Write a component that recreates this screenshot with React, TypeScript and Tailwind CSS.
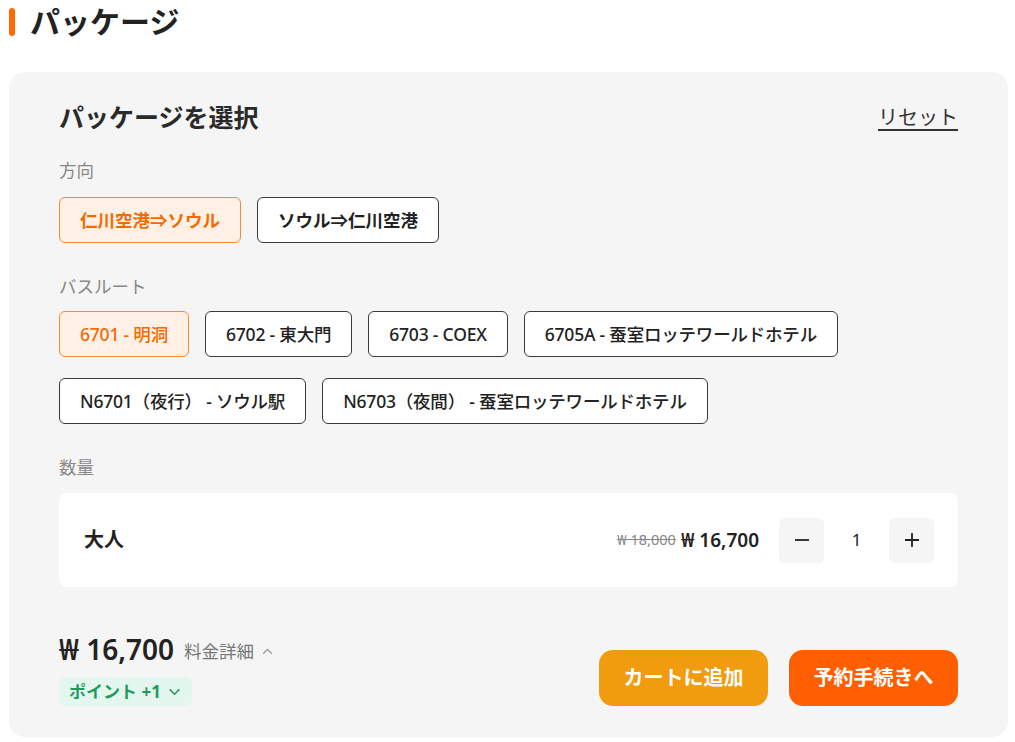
import { useState } from "react";

const directions = ["仁川空港⇒ソウル", "ソウル⇒仁川空港"];
const routes = [
  "6701 - 明洞",
  "6702 - 東大門",
  "6703 - COEX",
  "6705A - 蚕室ロッテワールドホテル",
  "N6701（夜行） - ソウル駅",
  "N6703（夜間） - 蚕室ロッテワールドホテル",
];

export default function App() {
  const [dir, setDir] = useState(0);
  const [route, setRoute] = useState(0);
  const [qty, setQty] = useState(1);

  const chip = (active: boolean) =>
    active
      ? "h-[46px] px-5 rounded-md border border-[#f7892f] bg-[#fff0e5] text-[#f56a00]"
      : "h-[46px] px-5 rounded-md border border-[#3a3a3a] bg-white text-[#222]";

  return (
    <div className="min-h-[742px] bg-white text-[#222] font-['Noto_Sans','Noto_Sans_CJK_JP',sans-serif]">
      <div className="flex items-center gap-[15px] pl-[9px] h-[44px]">
        <span className="w-[6px] h-[28px] rounded-full bg-[#ff6a00]" />
        <h1 className="text-[30px] font-bold leading-none">パッケージ</h1>
      </div>

      <div className="ml-[9px] mr-[7px] mt-[28px] rounded-2xl bg-[#f5f5f5] px-[50px] pt-[30px] pb-[31px]">
        <div className="flex items-center justify-between h-[32px]">
          <h2 className="text-[25px] font-bold text-[#2a2a2a]">パッケージを選択</h2>
          <button className="text-[20px] text-[#333] underline underline-offset-4">リセット</button>
        </div>

        <p className="mt-[24px] text-[17.5px] leading-6 text-[#888]">方向</p>
        <div className="mt-[15px] flex gap-4">
          {directions.map((d, i) => (
            <button key={d} onClick={() => setDir(i)} className={chip(dir === i) + " text-[17.5px] font-bold"}>
              {d}
            </button>
          ))}
        </div>

        <p className="mt-[31px] text-[17.5px] leading-6 text-[#888]">バスルート</p>
        <div className="mt-[13px] flex flex-wrap gap-x-4 gap-y-[21px]">
          {routes.map((r, i) => (
            <button
              key={r}
              onClick={() => setRoute(i)}
              className={chip(route === i) + " text-[17.5px] font-medium tracking-[-0.2px]"}
            >
              {r}
            </button>
          ))}
        </div>

        <p className="mt-[31px] text-[17.5px] leading-6 text-[#888]">数量</p>
        <div className="mt-[14px] h-[94px] rounded-lg bg-white flex items-center justify-between pl-[25px] pr-[24px]">
          <span className="text-[20px] font-bold">大人</span>
          <div className="flex items-center">
            <span className="text-[14.5px] text-[#888] line-through mr-[5px]">₩ 18,000</span>
            <span className="text-[19px] font-semibold">₩ 16,700</span>
            <button
              onClick={() => setQty(Math.max(1, qty - 1))}
              className="ml-[20px] w-[45px] h-[45px] rounded-md bg-[#f5f5f5] flex items-center justify-center"
            >
              <svg width="18" height="18" viewBox="0 0 18 18" fill="none" stroke="#222" strokeWidth="1.8">
                <path d="M2 9h14" />
              </svg>
            </button>
            <span className="w-[65px] text-center text-[17px]">{qty}</span>
            <button
              onClick={() => setQty(qty + 1)}
              className="w-[45px] h-[45px] rounded-md bg-[#f5f5f5] flex items-center justify-center"
            >
              <svg width="18" height="18" viewBox="0 0 18 18" fill="none" stroke="#222" strokeWidth="1.8">
                <path d="M2 9h14M9 2v14" />
              </svg>
            </button>
          </div>
        </div>

        <div className="mt-[44px] flex items-end justify-between">
          <div>
            <div className="flex items-center gap-[10px]">
              <span className="text-[28px] font-semibold leading-9">₩ 16,700</span>
              <span className="text-[17.5px] text-[#777] flex items-center gap-[7px] mt-[4px]">
                料金詳細
                <svg width="13" height="13" viewBox="0 0 12 12" fill="none" stroke="#999" strokeWidth="1.2">
                  <path d="M2 8l4-4 4 4" />
                </svg>
              </span>
            </div>
            <div className="mt-[10px] inline-flex items-center gap-[6px] h-[29px] px-[10px] rounded-md bg-[#e4f7ee] text-[#1f9a5c] text-[17px] font-bold">
              ポイント +1
              <svg width="15" height="15" viewBox="0 0 14 14" fill="none" stroke="#1f9a5c" strokeWidth="1.4">
                <path d="M2.5 5l4.5 4.5L11.5 5" />
              </svg>
            </div>
          </div>
          <div className="flex gap-[21px]">
            <button className="w-[169px] h-[56px] rounded-[14px] bg-[#f09c0e] text-white text-[20px] font-bold">
              カートに追加
            </button>
            <button className="w-[169px] h-[56px] rounded-[14px] bg-[#ff5f00] text-white text-[20px] font-bold">
              予約手続きへ
            </button>
          </div>
        </div>
      </div>
    </div>
  );
}
